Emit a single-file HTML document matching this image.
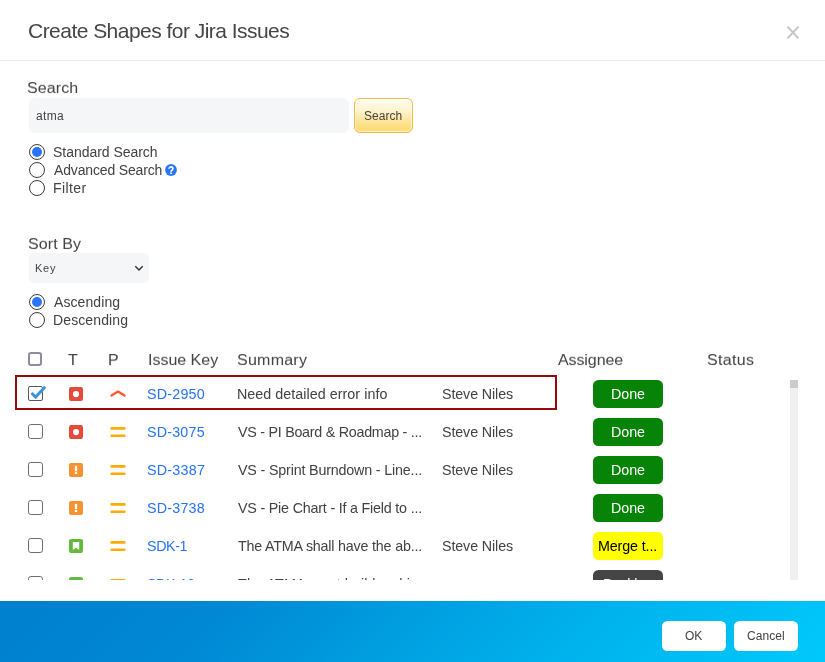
<!DOCTYPE html>
<html><head><meta charset="utf-8">
<style>
*{box-sizing:border-box;margin:0;padding:0}
html,body{width:825px;height:662px;overflow:hidden;background:#fff}
body{font-family:"Liberation Sans",sans-serif;color:#333;position:relative}
.abs{position:absolute;white-space:pre}
.txt{will-change:transform}
.hr{left:0;top:60px;width:825px;height:1px;background:#ebebeb}
.input{left:28.5px;top:98px;width:320.5px;height:34.7px;background:#f5f6f8;border-radius:6px}
.sbtn{left:354px;top:98px;width:59px;height:34.8px;border:1.5px solid #fbb83f;border-radius:6px;box-shadow:inset 0 0 0 1px rgba(255,255,255,.55);background:linear-gradient(#fffdf4 0%,#fff3cf 35%,#fde394 70%,#fcdb78 92%,#fde290 100%)}
.radio{width:16px;height:16px;border-radius:50%;border:1.35px solid #3c3c3c;background:#fff;left:29px}
.radio.on:after{content:"";position:absolute;left:1.7px;top:1.7px;width:10px;height:10px;border-radius:50%;background:#2a74fb}
.sel{left:29px;top:253px;width:120px;height:30px;background:#f5f6f8;border-radius:5px}
.cb{width:15px;height:15.2px;border:1.5px solid #6e6e6e;border-radius:2.8px;background:#fff;left:28px}
.st{left:593px;width:70px;height:27.8px;border-radius:5.5px}
.sel-box{left:15px;top:375px;width:541.8px;height:34.6px;border:2.9px solid #970a0a}
.sbar{left:790px;top:380px;width:8.4px;height:200px;background:#f0f0f0}
.sthumb{left:790px;top:380px;width:8.4px;height:7.9px;background:#cbcbcb}
.clip{left:0;top:372px;width:825px;height:208.4px;overflow:hidden}
.footer{left:0;top:600.5px;width:825px;height:62px;background:linear-gradient(135deg,#0080cf 0%,#0082d0 8%,#0088d4 26%,#009fe0 49%,#00b4ee 72%,#00c4f8 93%,#00c8fa 100%)}
.fbtn{top:621.3px;height:29.5px;width:64px;background:#fff;border-radius:5.5px}
</style></head><body>
<svg class="abs" style="left:786px;top:25px" width="14" height="15" viewBox="0 0 14 15"><path d="M1.6 1.6L12.4 13.4M12.4 1.6L1.6 13.4" stroke="#c6c6c6" stroke-width="2" fill="none"/></svg>
<div class="abs hr"></div>
<div class="abs input"></div>
<div class="abs sbtn"></div>
<div class="abs radio on" style="top:144px"></div>
<div class="abs radio" style="top:162.2px"></div>
<svg class="abs" style="left:165.2px;top:164.4px" width="12" height="12" viewBox="0 0 12 12"><circle cx="6" cy="6" r="5.9" fill="#2a74f9"/><path d="M4.1 4.7a1.9 1.75 0 1 1 2.9 1.45c-.7.45-.95.75-.95 1.5" stroke="#fff" stroke-width="1.7" fill="none"/><rect x="5.25" y="8.5" width="1.6" height="1.5" fill="#fff"/></svg>
<div class="abs radio" style="top:180.2px"></div>
<div class="abs sel"><svg style="position:absolute;left:105.3px;top:12.2px" width="10" height="7" viewBox="0 0 10 7"><path d="M1.3 1.3L5 5L8.7 1.3" stroke="#333" stroke-width="1.5" fill="none"/></svg></div>
<div class="abs radio on" style="top:294.2px"></div>
<div class="abs radio" style="top:312.2px"></div>
<div class="abs cb" style="top:352.2px;width:14.2px;height:13.8px;border:2px solid #8c8ca0;border-radius:3px"></div>
<div class="abs clip">
<div class="abs st" style="top:8.0px;background:#078307"></div>
<div class="abs cb" style="top:14.0px;height:14.8px;border-width:1.1px;border-color:#5a5a5a;border-radius:2px"></div><svg class="abs" style="left:28px;top:11.9px" width="20" height="20" viewBox="0 0 20 20"><path d="M3.5 9.0L7.6 13.1L17.2 2.7" stroke="#3b94d6" stroke-width="2.9" fill="none" stroke-linejoin="miter"/></svg>
<svg class="abs" style="left:69px;top:15.0px" width="14" height="14" viewBox="0 0 14 14"><rect width="14" height="14" rx="2.2" fill="#e5493a"/><circle cx="7" cy="7.1" r="3.1" fill="#fff"/></svg>
<svg class="abs" style="left:109px;top:14.9px" width="18" height="14" viewBox="0 0 18 14"><path d="M2.5 8.6L9 4.6L15.5 8.6" stroke="#ff5630" stroke-width="2.3" fill="none" stroke-linecap="round" stroke-linejoin="round"/></svg>
<div class="abs st" style="top:46.0px;background:#078307"></div>
<div class="abs cb" style="top:52.3px"></div>
<svg class="abs" style="left:69px;top:53.0px" width="14" height="14" viewBox="0 0 14 14"><rect width="14" height="14" rx="2.2" fill="#e5493a"/><circle cx="7" cy="7.1" r="3.1" fill="#fff"/></svg>
<svg class="abs" style="left:109px;top:52.9px" width="18" height="14" viewBox="0 0 18 14"><path d="M2.6 3.4H15.4M2.6 10.7H15.4" stroke="#ffab00" stroke-width="2.6" fill="none" stroke-linecap="round"/></svg>
<div class="abs st" style="top:84.0px;background:#078307"></div>
<div class="abs cb" style="top:90.3px"></div>
<svg class="abs" style="left:69px;top:91.0px" width="14" height="14" viewBox="0 0 14 14"><rect width="14" height="14" rx="2.2" fill="#f79232"/><rect x="5.85" y="2.9" width="2.3" height="5.4" fill="#fff"/><rect x="5.85" y="9.1" width="2.3" height="1.9" fill="#fff"/></svg>
<svg class="abs" style="left:109px;top:90.9px" width="18" height="14" viewBox="0 0 18 14"><path d="M2.6 3.4H15.4M2.6 10.7H15.4" stroke="#ffab00" stroke-width="2.6" fill="none" stroke-linecap="round"/></svg>
<div class="abs st" style="top:122.0px;background:#078307"></div>
<div class="abs cb" style="top:128.3px"></div>
<svg class="abs" style="left:69px;top:129.0px" width="14" height="14" viewBox="0 0 14 14"><rect width="14" height="14" rx="2.2" fill="#f79232"/><rect x="5.85" y="2.9" width="2.3" height="5.4" fill="#fff"/><rect x="5.85" y="9.1" width="2.3" height="1.9" fill="#fff"/></svg>
<svg class="abs" style="left:109px;top:128.9px" width="18" height="14" viewBox="0 0 18 14"><path d="M2.6 3.4H15.4M2.6 10.7H15.4" stroke="#ffab00" stroke-width="2.6" fill="none" stroke-linecap="round"/></svg>
<div class="abs st" style="top:160.0px;background:#ffff00"></div>
<div class="abs cb" style="top:166.3px"></div>
<svg class="abs" style="left:69px;top:167.0px" width="14" height="14" viewBox="0 0 14 14"><rect width="14" height="14" rx="2.2" fill="#63ba3c"/><path d="M3.8 3.1h6.4v8l-3.2-2.3-3.2 2.3z" fill="#fff"/></svg>
<svg class="abs" style="left:109px;top:166.9px" width="18" height="14" viewBox="0 0 18 14"><path d="M2.6 3.4H15.4M2.6 10.7H15.4" stroke="#ffab00" stroke-width="2.6" fill="none" stroke-linecap="round"/></svg>
<div class="abs st" style="top:198.0px;background:#454545"></div>
<div class="abs cb" style="top:204.3px"></div>
<svg class="abs" style="left:69px;top:205.0px" width="14" height="14" viewBox="0 0 14 14"><rect width="14" height="14" rx="2.2" fill="#63ba3c"/><path d="M3.8 3.1h6.4v8l-3.2-2.3-3.2 2.3z" fill="#fff"/></svg>
<svg class="abs" style="left:109px;top:204.9px" width="18" height="14" viewBox="0 0 18 14"><path d="M2.6 3.4H15.4M2.6 10.7H15.4" stroke="#ffab00" stroke-width="2.6" fill="none" stroke-linecap="round"/></svg>
<div class="abs txt" style="left:147.33px;top:15.2px;font-size:14.3px;line-height:14.3px;letter-spacing:0.204px;color:#2873fa;">SD-2950</div>
<div class="abs txt" style="left:236.99px;top:15.2px;font-size:14.3px;line-height:14.3px;letter-spacing:0.041px;color:#424242;">Need detailed error info</div>
<div class="abs txt" style="left:442.33px;top:15.2px;font-size:14.3px;line-height:14.3px;letter-spacing:-0.120px;color:#424242;">Steve Niles</div>
<div class="abs txt" style="left:610.91px;top:14.9px;font-size:14.3px;line-height:14.3px;letter-spacing:-0.039px;color:#fff;">Done</div>
<div class="abs txt" style="left:147.12px;top:53.2px;font-size:14.3px;line-height:14.3px;letter-spacing:0.193px;color:#2873fa;">SD-3075</div>
<div class="abs txt" style="left:237.83px;top:53.2px;font-size:14.3px;line-height:14.3px;letter-spacing:-0.262px;color:#424242;">VS - PI Board &amp; Roadmap - ...</div>
<div class="abs txt" style="left:442.33px;top:53.2px;font-size:14.3px;line-height:14.3px;letter-spacing:-0.120px;color:#424242;">Steve Niles</div>
<div class="abs txt" style="left:610.91px;top:52.9px;font-size:14.3px;line-height:14.3px;letter-spacing:-0.039px;color:#fff;">Done</div>
<div class="abs txt" style="left:147.17px;top:91.2px;font-size:14.3px;line-height:14.3px;letter-spacing:0.234px;color:#2873fa;">SD-3387</div>
<div class="abs txt" style="left:237.83px;top:91.2px;font-size:14.3px;line-height:14.3px;letter-spacing:-0.171px;color:#424242;">VS - Sprint Burndown - Line...</div>
<div class="abs txt" style="left:442.33px;top:91.2px;font-size:14.3px;line-height:14.3px;letter-spacing:-0.120px;color:#424242;">Steve Niles</div>
<div class="abs txt" style="left:610.91px;top:90.9px;font-size:14.3px;line-height:14.3px;letter-spacing:-0.039px;color:#fff;">Done</div>
<div class="abs txt" style="left:147.12px;top:129.2px;font-size:14.3px;line-height:14.3px;letter-spacing:0.205px;color:#2873fa;">SD-3738</div>
<div class="abs txt" style="left:237.83px;top:129.2px;font-size:14.3px;line-height:14.3px;letter-spacing:-0.198px;color:#424242;">VS - Pie Chart - If a Field to ...</div>
<div class="abs txt" style="left:610.91px;top:128.9px;font-size:14.3px;line-height:14.3px;letter-spacing:-0.039px;color:#fff;">Done</div>
<div class="abs txt" style="left:147.33px;top:167.2px;font-size:14.3px;line-height:14.3px;letter-spacing:-0.403px;color:#2873fa;">SDK-1</div>
<div class="abs txt" style="left:238.36px;top:167.2px;font-size:14.3px;line-height:14.3px;letter-spacing:-0.196px;color:#424242;">The ATMA shall have the ab...</div>
<div class="abs txt" style="left:442.33px;top:167.2px;font-size:14.3px;line-height:14.3px;letter-spacing:-0.120px;color:#424242;">Steve Niles</div>
<div class="abs txt" style="left:597.56px;top:166.9px;font-size:14.3px;line-height:14.3px;letter-spacing:-0.124px;color:#000;">Merge t...</div>
<div class="abs txt" style="left:147.33px;top:205.2px;font-size:14.3px;line-height:14.3px;letter-spacing:-0.431px;color:#2873fa;">SDK-10</div>
<div class="abs txt" style="left:238.36px;top:205.2px;font-size:14.3px;line-height:14.3px;letter-spacing:0.151px;color:#424242;">The ATMA must build a ski...</div>
<div class="abs txt" style="left:603.01px;top:204.9px;font-size:14.3px;line-height:14.3px;letter-spacing:-0.155px;color:#fff;">Backlog</div>
</div>
<div class="abs sel-box"></div>
<div class="abs sbar"></div><div class="abs sthumb"></div>
<div class="abs footer"></div>
<div class="abs fbtn" style="left:662px"></div>
<div class="abs fbtn" style="left:734px"></div>
<div class="abs txt" style="left:27.78px;top:19.8px;font-size:21px;line-height:21px;letter-spacing:-0.533px;color:#454545;">Create Shapes for Jira Issues</div>
<div class="abs txt" style="left:27.44px;top:79.6px;font-size:16px;line-height:16px;letter-spacing:0.084px;color:#424242;transform:scaleY(0.92);transform-origin:0 13.54px;">Search</div>
<div class="abs txt" style="left:35.83px;top:109.6px;font-size:12px;line-height:12px;letter-spacing:0.345px;color:#424242;">atma</div>
<div class="abs txt" style="left:364.35px;top:109.7px;font-size:12px;line-height:12px;letter-spacing:0.025px;color:#424242;">Search</div>
<div class="abs txt" style="left:52.65px;top:145.4px;font-size:14px;line-height:14px;letter-spacing:-0.037px;color:#424242;">Standard Search</div>
<div class="abs txt" style="left:53.75px;top:163.4px;font-size:14px;line-height:14px;letter-spacing:-0.154px;color:#424242;">Advanced Search</div>
<div class="abs txt" style="left:52.57px;top:181.4px;font-size:14px;line-height:14px;letter-spacing:0.391px;color:#424242;">Filter</div>
<div class="abs txt" style="left:28.23px;top:235.6px;font-size:16px;line-height:16px;letter-spacing:0.077px;color:#424242;transform:scaleY(0.92);transform-origin:0 13.54px;">Sort By</div>
<div class="abs txt" style="left:35.37px;top:262.9px;font-size:11px;line-height:11px;letter-spacing:0.731px;color:#424242;">Key</div>
<div class="abs txt" style="left:53.75px;top:295.4px;font-size:14px;line-height:14px;letter-spacing:0.089px;color:#424242;">Ascending</div>
<div class="abs txt" style="left:52.57px;top:313.4px;font-size:14px;line-height:14px;letter-spacing:0.119px;color:#424242;">Descending</div>
<div class="abs txt" style="left:68.20px;top:352.0px;font-size:16px;line-height:16px;letter-spacing:0.000px;color:#424242;transform:scaleY(0.92);transform-origin:0 13.54px;">T</div>
<div class="abs txt" style="left:108.00px;top:352.0px;font-size:16px;line-height:16px;letter-spacing:0.000px;color:#424242;transform:scaleY(0.92);transform-origin:0 13.54px;">P</div>
<div class="abs txt" style="left:147.80px;top:352.0px;font-size:16px;line-height:16px;letter-spacing:-0.012px;color:#424242;transform:scaleY(0.92);transform-origin:0 13.54px;">Issue Key</div>
<div class="abs txt" style="left:236.89px;top:352.0px;font-size:16px;line-height:16px;letter-spacing:0.248px;color:#424242;transform:scaleY(0.92);transform-origin:0 13.54px;">Summary</div>
<div class="abs txt" style="left:558.28px;top:352.0px;font-size:16px;line-height:16px;letter-spacing:-0.099px;color:#424242;transform:scaleY(0.92);transform-origin:0 13.54px;">Assignee</div>
<div class="abs txt" style="left:706.76px;top:352.0px;font-size:16px;line-height:16px;letter-spacing:0.342px;color:#424242;transform:scaleY(0.92);transform-origin:0 13.54px;">Status</div>
<div class="abs txt" style="left:685.46px;top:629.8px;font-size:12px;line-height:12px;letter-spacing:-0.038px;color:#424242;">OK</div>
<div class="abs txt" style="left:747.49px;top:629.8px;font-size:12px;line-height:12px;letter-spacing:0.048px;color:#424242;">Cancel</div>
</body></html>
